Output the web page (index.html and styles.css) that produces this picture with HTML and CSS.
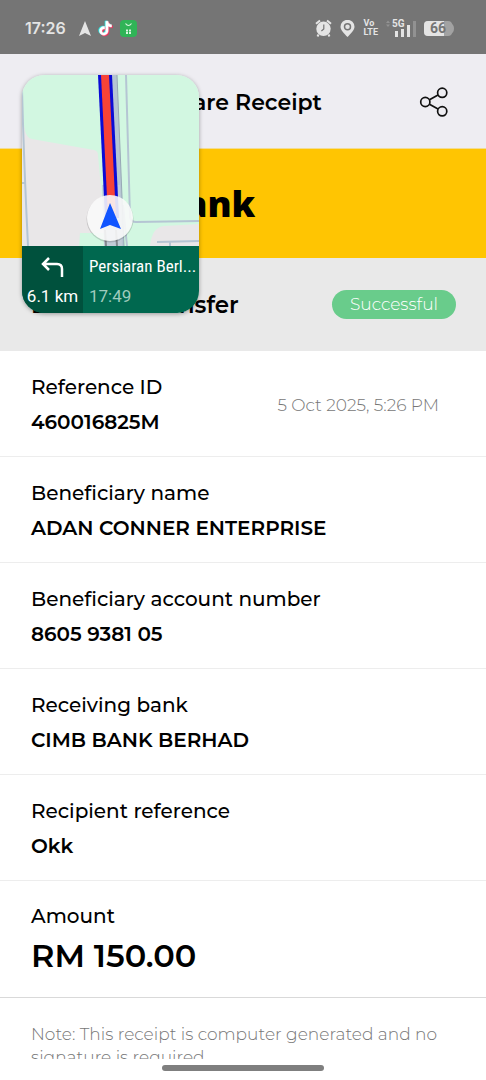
FILE: index.html
```
<!DOCTYPE html>
<html lang="en">
<head>
    <meta charset="UTF-8">
    <meta name="viewport" content="width=device-width, initial-scale=1.0">
    <title>Share Receipt</title>
    <link rel="stylesheet" href="styles.css">
</head>
<body>
    <div class="screen">
        <div class="status-bar">
            <span class="clock">17:26</span>
            <div class="status-apps">
                <svg width="12" height="15" viewBox="0 0 12 15"><path d="M6 0 12 15 6 12 0 15Z" fill="#e4e4e4"/></svg>
                <svg width="15" height="17" viewBox="-1 -1 26 27">
                    <defs>
                        <path id="note" d="M12.525.02c1.31-.02 2.61-.01 3.91-.02.08 1.53.63 3.09 1.75 4.17 1.12 1.11 2.7 1.62 4.24 1.79v4.03c-1.44-.05-2.89-.35-4.2-.97-.57-.26-1.1-.59-1.62-.93-.01 2.92.01 5.84-.02 8.75-.08 1.4-.54 2.79-1.35 3.94-1.31 1.92-3.58 3.17-5.91 3.21-1.43.08-2.86-.31-4.08-1.03-2.02-1.19-3.44-3.37-3.65-5.71-.02-.5-.03-1-.01-1.49.18-1.9 1.12-3.72 2.58-4.96 1.66-1.44 3.98-2.13 6.15-1.72.02 1.48-.04 2.96-.04 4.44-.99-.32-2.15-.23-3.02.37-.63.41-1.11 1.04-1.36 1.75-.21.51-.15 1.07-.14 1.61.24 1.64 1.82 3.02 3.5 2.87 1.12-.01 2.19-.66 2.77-1.61.19-.33.4-.67.41-1.06.1-1.79.06-3.57.07-5.36.01-4.03-.01-8.05.02-12.07z"/>
                    </defs>
                    <use href="#note" x="-1.5" y="-.7" fill="#25e5e0" stroke="#25e5e0"/>
                    <use href="#note" x="1.5" y="1.500" fill="#f3305b" stroke="#f3305b"/>
                    <use href="#note" fill="#fff" stroke="#fff"/>
                </svg>
                <svg width="17" height="17" viewBox="0 0 17 17">
                    <rect width="17" height="17" rx="4" fill="#30b457"/>
                    <path d="M5.500 3.500q3 4 6 0" fill="none" stroke="#d9f5df" stroke-width="1.200"/>
                    <path d="M6 9.500h2v2H6zM9 9.500h2v2H9zM6 12h2v2H6zM9 12h2v2H9z" fill="#d9f5df"/>
                </svg>
            </div>
            <div class="status-system">
                <svg width="17" height="18" viewBox="0 0 17 18">
                    <circle cx="8.500" cy="9.800" r="7.200" fill="#e4e4e4"/>
                    <path d="M1 4.800 5 1.400M16 4.800 12 1.400M3.500 15.500 2.500 17.500M13.500 15.500l1 2" stroke="#e4e4e4" stroke-width="2"/>
                    <path d="M8.800 5.500V10L6.400 12" fill="none" stroke="#757575" stroke-width="1.200"/>
                </svg>
                <svg width="15" height="17" viewBox="0 0 15 17">
                    <path d="M7.500 17C4 13.500.5 10 .5 6.800a7 7 0 0 1 14 0c0 3.200-3.500 6.700-7 10.200Z" fill="#e4e4e4"/>
                    <circle cx="7.500" cy="6.800" r="3" fill="none" stroke="#757575" stroke-width="1.500"/>
                </svg>
                <span class="volte">Vo<br>LTE</span>
                <svg width="30" height="18" viewBox="0 0 30 18">
                    <path d="M0 4 2 1.500 4 4ZM0 5.500h4L2 8Z" fill="#929292"/>
                    <text x="6" y="8" class="network">5G</text>
                    <path d="M9 12h3v6H9zM15 10h3v8h-3zM21 6h3v12h-3z" fill="#e4e4e4"/>
                    <path d="M27 2h3v16h-3z" fill="#929292"/>
                </svg>
                <svg width="30" height="15" viewBox="0 0 30 15">
                    <rect x="0" y="0" width="28" height="15" rx="4" fill="#a2a2a2"/>
                    <path d="M27 2q3 2 3 5.500T27 13Z" fill="#a2a2a2"/>
                    <path d="M4 0h16v15H4a4 4 0 0 1-4-4V4a4 4 0 0 1 4-4Z" fill="#e4e4e4"/>
                    <text x="14" y="12" class="battery">66</text>
                </svg>
            </div>
        </div>

        <main class="content">
            <header class="header">
                <h1 class="title">Share Receipt</h1>
                <button class="share" type="button" aria-label="Share">
                    <svg width="30" height="30" viewBox="0 0 30 30" fill="none" stroke="#111" stroke-width="1.700">
                        <circle cx="6.300" cy="15" r="4.600"/>
                        <circle cx="23.200" cy="5.800" r="4.600"/>
                        <circle cx="23.200" cy="24.300" r="4.600"/>
                        <path d="M10.500 12.800 19 8.100M10.500 17.300 19 22"/>
                    </svg>
                </button>
            </header>

            <div class="banner">
                <span class="bank-logo">Maybank</span>
            </div>

            <div class="summary">
                <h2 class="transfer-type">DuitNow Transfer</h2>
                <span class="badge">Successful</span>
            </div>

            <dl class="details">
                <div class="row">
                    <dt>Reference ID</dt>
                    <dd>460016825M</dd>
                    <dd class="date">5 Oct 2025, 5:26 PM</dd>
                </div>
                <div class="row">
                    <dt>Beneficiary name</dt>
                    <dd>ADAN CONNER ENTERPRISE</dd>
                </div>
                <div class="row">
                    <dt>Beneficiary account number</dt>
                    <dd>8605 9381 05</dd>
                </div>
                <div class="row">
                    <dt>Receiving bank</dt>
                    <dd>CIMB BANK BERHAD</dd>
                </div>
                <div class="row">
                    <dt>Recipient reference</dt>
                    <dd>Okk</dd>
                </div>
                <div class="row total">
                    <dt>Amount</dt>
                    <dd class="amount">RM 150.00</dd>
                </div>
            </dl>

            <p class="note">Note: This receipt is computer generated and no signature is required.</p>
        </main>

        <div class="nav-bar"><div class="nav-handle"></div></div>

        <!-- Floating navigation window -->
        <aside class="pip">
            <svg class="map" viewBox="0 0 177 171">
                <rect width="177" height="171" fill="#d2f7e1"/>
                <path d="M0 40 3 56Q5 63 10 64L72 75Q76 76 76 80L83 158H58L57 171H0Z" fill="#e9e7e8"/>
                <path d="M128 171Q130 152 142 151L177 149V171Z" fill="#e9e7e8"/>
                <g fill="none" stroke="#b5c5d3" stroke-width="2">
                    <path d="M0 15Q2 90 6 171M0 108H3"/>
                    <path d="M104 0 108 142Q109 147 114 147L177 146"/>
                    <path d="M101 130 105 171M135 167 177 166M148 167V171"/>
                </g>
                <path d="M88 0H95L102 171H92Z" fill="#b5c5d3"/>
                <path d="M95 0 102 171" stroke="#97a8b5" stroke-width="1"/>
                <path d="M80 110H98L100 171H82Z" fill="#c2ccd8"/>
                <path d="M83 155 84 171M94 155 95 171" stroke="#858990" stroke-width="2"/>
                <path d="M76 0H90L97 143H83Z" fill="#0b0bd6"/>
                <path d="M79 0H87L94 143H86Z" fill="#f74337"/>
                <circle cx="88" cy="144" r="23.500" fill="#000" opacity=".15"/>
                <circle cx="88" cy="143" r="23" fill="#fff" opacity=".87"/>
                <path d="M88 128 99 154 88 150 78 154Z" fill="#1155ff"/>
            </svg>
            <div class="directions">
                <div class="turn">
                    <svg width="24" height="20" viewBox="0 0 24 20" fill="none" stroke="#fff" stroke-width="2.500">
                        <path d="M8 1 2 7 8 13M2 7H16Q21 7 21 12V20"/>
                    </svg>
                    <span>6.1 km</span>
                </div>
                <div class="road">
                    <span class="road-name">Persiaran Berl...</span>
                    <span class="eta">17:49</span>
                </div>
            </div>
        </aside>
    </div>
</body>
</html>
```
FILE: styles.css
```
* {
    box-sizing: border-box;
}
body {
    margin: 0;
    font-family: Montserrat, Inter, sans-serif;
    background-color: #fff;
    color: #000;
}
h1, h2, p, dl, dd {
    margin: 0;
}
svg {
    display: block;
}
.screen {
    position: relative;
    display: flex;
    flex-direction: column;
    height: 100vh;
    overflow: hidden;
}

/* Status bar */
.status-bar {
    display: flex;
    align-items: center;
    flex: none;
    height: 54px;
    padding: 2px 32px 0 25px;
    background-color: #757575;
    color: #e4e4e4;
}
.clock {
    font-family: Inter, sans-serif;
    font-size: 16px;
    font-weight: 600;
}
.status-apps {
    display: flex;
    align-items: center;
    gap: 7px;
    margin-left: 13px;
}
.status-system {
    display: flex;
    align-items: center;
    gap: 8px;
    margin-left: auto;
}
.volte {
    font: bold 9px/9px Roboto, sans-serif;
}
.network {
    font: bold 10px Roboto, sans-serif;
    fill: #e4e4e4;
}
.battery {
    font: bold 14px Roboto, sans-serif;
    fill: #757575;
    text-anchor: middle;
}

/* Receipt */
.content {
    flex: 1;
    min-height: 0;
    overflow: hidden;
}
.header {
    display: grid;
    grid-template-columns: 1fr auto 1fr;
    align-items: center;
    height: 95px;
    padding: 2px 37px 0;
    background-color: #eeedf2;
    border-bottom: 1px solid #f2dc93;
}
.title {
    grid-column: 2;
    font-size: 22px;
    font-weight: 600;
}
.share {
    justify-self: end;
    padding: 0;
    border: none;
    background: none;
    cursor: pointer;
}
.banner {
    display: flex;
    align-items: center;
    justify-content: center;
    height: 109px;
    background-color: #ffc502;
}
.bank-logo {
    font-family: "Open Sans", sans-serif;
    font-size: 36px;
    font-weight: 800;
    margin-right: 148px;
}
.summary {
    display: flex;
    align-items: center;
    justify-content: space-between;
    height: 93px;
    padding: 0 30px 0 31px;
    background-color: #e9e9e9;
}
.transfer-type {
    font-size: 23px;
    font-weight: 600;
}
.badge {
    padding: 0 18px;
    border-radius: 15px;
    background-color: #69cc8b;
    color: #fff;
    font-size: 17px;
    font-weight: 300;
    line-height: 29px;
}
.row {
    display: grid;
    grid-template-columns: 1fr auto;
    align-items: center;
    row-gap: 7px;
    padding: 22px 47px 20px 31px;
    border-bottom: 1px solid #ededed;
    line-height: 28px;
}
.row dt {
    grid-column: 1;
    font-size: 20px;
    font-weight: 500;
}
.row dd {
    grid-column: 1;
    font-size: 20px;
    font-weight: 600;
}
.row .date {
    grid-column: 2;
    grid-row: 1 / 3;
    color: #777;
    font-size: 17px;
    font-weight: 300;
}
.total {
    row-gap: 6px;
    padding-top: 21px;
    padding-bottom: 21px;
    border-bottom-color: #d9d9d9;
}
.row .amount {
    font-size: 32px;
    line-height: 40px;
}
.note {
    padding: 25px 31px;
    color: #777;
    font-size: 17px;
    font-weight: 300;
    line-height: 23px;
}
.nav-bar {
    flex: none;
    padding: 6px 0 9px;
}
.nav-handle {
    width: 33.333%;
    height: 6px;
    margin: 0 auto;
    border-radius: 3px;
    background-color: #7f7f7f;
}

/* Floating window */
.pip {
    position: absolute;
    top: 75px;
    left: 22px;
    width: 177px;
    border-radius: 22px;
    overflow: hidden;
    box-shadow: 0 1px 4px rgba(0,0,0,0.35);
    color: #fff;
    font-family: Roboto, sans-serif;
    font-size: 17px;
    line-height: 24px;
    white-space: nowrap;
}
.map {
    width: 100%;
}
.directions {
    display: flex;
    height: 67px;
    background-color: #00684f;
}
.turn {
    display: flex;
    flex: none;
    flex-direction: column;
    align-items: center;
    justify-content: space-between;
    width: 61px;
    padding: 11px 0 5px;
    background-color: #00513d;
}
.road {
    display: flex;
    flex-direction: column;
    justify-content: space-between;
    padding: 8px 0 5px 6px;
}
.road-name {
    font-family: "Roboto Condensed", "Liberation Sans Narrow", Roboto, sans-serif;
}
.eta {
    color: #9fcbbd;
}
```
